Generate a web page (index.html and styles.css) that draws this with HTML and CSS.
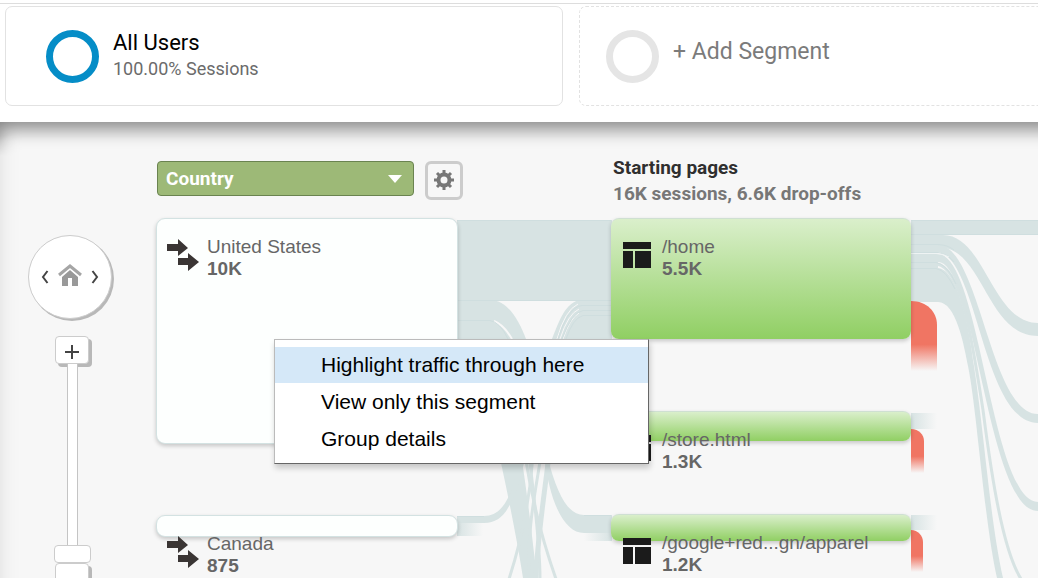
FILE: index.html
```html
<!DOCTYPE html>
<html lang="en">
<head>
<meta charset="utf-8">
<meta name="viewport" content="width=device-width, initial-scale=1">
<title>Users Flow</title>
<link rel="stylesheet" href="styles.css">
</head>
<body>
<svg class="defs" width="0" height="0" aria-hidden="true">
  <symbol id="arrows" viewBox="0 0 32 32">
    <path d="M0 5H11V0L21 9 11 17V12H0ZM11 19H21V14L32 23 21 32V26H11Z"/>
  </symbol>
  <symbol id="page" viewBox="0 0 28 26">
    <path d="M0 0H28V7H0ZM0 9H10V26H0ZM12 9H28V26H12Z"/>
  </symbol>
</svg>

<header class="segments">
  <section class="segment">
    <span class="ring ring-active"></span>
    <div class="segment-text">
      <h2 class="segment-name">All Users</h2>
      <p class="segment-share">100.00% Sessions</p>
    </div>
  </section>
  <button class="segment segment-add" type="button">
    <span class="ring"></span>
    <span class="segment-text">+ Add Segment</span>
  </button>
</header>

<main class="flow">
  <svg class="ribbons" width="1038" height="456" viewBox="0 122 1038 456" aria-hidden="true">
    <defs>
      <linearGradient id="drop" x1="0" y1="0" x2="0" y2="1">
        <stop offset="0" stop-color="#f07563"/>
        <stop offset=".62" stop-color="#f07563"/>
        <stop offset="1" stop-color="#f07563" stop-opacity="0"/>
      </linearGradient>
      <linearGradient id="fade-out">
        <stop offset="0" stop-color="#d7e3e3"/>
        <stop offset="1" stop-color="#d7e3e3" stop-opacity="0"/>
      </linearGradient>
      <linearGradient id="fade-in">
        <stop offset="0" stop-color="#d7e3e3" stop-opacity="0"/>
        <stop offset="1" stop-color="#d7e3e3"/>
      </linearGradient>
    </defs>
    <g fill="#d7e3e3">
      <path d="M457 220H612V300H457Z"/>
      <path d="M457 300H490C508 300 519 321 526 339L545 400H457Z"/>
      <path d="M612 300H582C565 300 558 325 552 339L540 400H612Z"/>
      <path d="M499 455L501 463C508 495 518 545 523 578H537C533 545 527 490 521 455Z"/>
      <path d="M457 516H484C500 516 509 502 516 475L520 455H526L521 475C512 505 504 523 484 523H457Z"/>
      <path d="M544 455C550 505 565 533 584 533H612V515H584C568 515 557 495 547 455Z"/>
      <path d="M911 220H1038V235H911Z"/>
      <path d="M911 235H943C985 235 992 323 1038 323V336C986 336 984 247 938 247H911Z"/>
      <path d="M911 245H938C980 245 990 414 1038 414V423C982 423 978 252 936 252H911Z"/>
      <path d="M911 254H938C980 254 991 502 1038 502V511C987 511 976 262 938 262H911Z"/>
      <path d="M911 262H938V268H911Z"/>
      <path d="M911 268H938C958 270 969 325 974 366C985 440 990 520 1003 578H997C984 520 977 410 968 366C964 345 956 302 938 302H911Z"/>
    </g>
    <g fill="none" stroke="#d7e3e3" stroke-width="3">
      <path d="M937 264C962 268 972 340 983 410C992 480 1003 550 1021 579"/>
      <path d="M533 455C530 500 520 545 509 579"/>
      <path d="M525 455C532 500 544 545 556 579"/>
      <path d="M549 455C545 490 537 540 536 579" stroke-width="5"/>
      <path d="M529 455C533 490 540 540 540 579"/>
      <path d="M541 455C536 490 526 530 530 579"/>
    </g>
    <g fill="none" stroke="#f7f7f7">
      <path d="M494 321Q504 325 512 339" stroke-width="2"/>
      <path d="M578 304Q565 310 557 339"/>
      <path d="M579 309Q568 314 560 339"/>
      <path d="M579 313Q570 318 563 339"/>
    </g>
    <g fill="none" stroke="#cfdedf">
      <path d="M457 300.500H611M457 320.500H490Q500 322 508 339M611 305.500H582Q568 307 558 339M611 310.500H583Q572 312 562 339M611 315.500H583Q573 318 566 339"/>
      <path d="M911 234.500H1038M911 244.500H938Q948 245 954 250M911 252.500H938Q948 254 954 262M911 262.500H936Q947 264 956 284M911 268.500H936Q946 270 955 289"/>
      <path d="M457 220.500H611M911 220.500H1038M457 516.500H484M584 515.500H611"/>
    </g>
    <path d="M911 253.500H936Q944 254 949 257" fill="none" stroke="#eef3f3"/>
    <rect x="457" y="523" width="26" height="13" fill="url(#fade-out)"/>
    <rect x="584" y="533" width="28" height="8" fill="url(#fade-in)"/>
    <rect x="911" y="413" width="26" height="16" fill="url(#fade-out)"/>
    <rect x="911" y="515" width="26" height="15" fill="url(#fade-out)"/>
    <g fill="url(#drop)">
      <path d="M911 301C927 301 937 312 937 325V371H911Z"/>
      <path d="M911 429C919 429 924 435 924 441V473H911Z"/>
      <path d="M911 530C918 530 923 536 923 542V572H911Z"/>
    </g>
  </svg>

  <div class="stage">
    <nav class="navigator" aria-label="Diagram navigation">
      <div class="pan">
        <button type="button" aria-label="Pan left"><svg width="8" height="18" viewBox="0 0 8 18"><path d="M6.500 5L2 11 6.500 17" fill="none" stroke="#444" stroke-width="2"/></svg></button>
        <button type="button" aria-label="Home"><svg width="24" height="22" viewBox="0 0 24 22"><path d="M1 11L12 2 23 11" fill="none" stroke="#a5a5a5" stroke-width="3"/><path d="M4 13L12 6 20 13V22H14V14H10V22H4Z" fill="#999"/></svg></button>
        <button type="button" aria-label="Pan right"><svg width="8" height="18" viewBox="0 0 8 18"><path d="M1.500 5L6 11 1.500 17" fill="none" stroke="#444" stroke-width="2"/></svg></button>
      </div>
      <div class="zoom">
        <button class="zoom-button" type="button" aria-label="Zoom in"><svg width="14" height="14" viewBox="0 0 14 14"><path d="M7 0V14M0 7H14" stroke="#444" stroke-width="2"/></svg></button>
        <input class="zoom-range" type="range" min="0" max="10" value="0" aria-label="Zoom level">
        <button class="zoom-button" type="button" aria-label="Zoom out"><svg width="14" height="14" viewBox="0 0 14 14"><path d="M0 11H14" stroke="#444" stroke-width="2"/></svg></button>
      </div>
    </nav>
    <div class="dimension">
      <div class="picker">
        <select aria-label="Dimension"><option>Country</option></select>
      </div>
      <button class="settings" type="button" aria-label="Settings">
        <svg width="22" height="22" viewBox="-11 -11 22 22">
          <g stroke="#777" stroke-width="3"><path d="M0-10V10M-10 0H10M-7-7L7 7M7-7L-7 7"/></g>
          <circle r="5.500" fill="#f7f7f7" stroke="#777" stroke-width="4"/>
        </svg>
      </button>
    </div>
    <div class="column-heading">
      <h3>Starting pages</h3>
      <p>16K sessions, 6.6K drop-offs</p>
    </div>
  </div>

  <article class="node node-us">
    <svg class="node-icon icon-arrows"><use href="#arrows"/></svg>
    <div><p>United States</p><strong>10K</strong></div>
  </article>
  <article class="node node-canada">
    <svg class="node-icon icon-arrows"><use href="#arrows"/></svg>
    <div><p>Canada</p><strong>875</strong></div>
  </article>
  <article class="node node-page node-home">
    <svg class="node-icon icon-page"><use href="#page"/></svg>
    <div><p>/home</p><strong>5.5K</strong></div>
  </article>
  <article class="node node-page node-store">
    <svg class="node-icon icon-page"><use href="#page"/></svg>
    <div><p>/store.html</p><strong>1.3K</strong></div>
  </article>
  <article class="node node-page node-apparel">
    <svg class="node-icon icon-page"><use href="#page"/></svg>
    <div><p>/google+red...gn/apparel</p><strong>1.2K</strong></div>
  </article>

  <div class="menu" role="menu">
    <button class="menu-item menu-item-active" type="button" role="menuitem">Highlight traffic through here</button>
    <button class="menu-item" type="button" role="menuitem">View only this segment</button>
    <button class="menu-item" type="button" role="menuitem">Group details</button>
  </div>
</main>
</body>
</html>
```
FILE: styles.css
```css
* {
  box-sizing: border-box;
}

body {
  display: flex;
  flex-direction: column;
  height: 100vh;
  margin: 0;
  background: #fff;
  font-family: Roboto, "Liberation Sans", sans-serif;
}

h2, h3, p {
  margin: 0;
}

button {
  padding: 0;
  border: 0;
  background: none;
  color: inherit;
  font: inherit;
}

.defs {
  position: absolute;
}

/* Segment bar */
.segments {
  display: flex;
  gap: 16px;
  margin-top: 3px;
  padding: 2px 0 16px 5px;
  border-top: 1px solid #ddd;
}

.segment {
  display: flex;
  flex: 0 1 558px;
  gap: 14px;
  height: 100px;
  padding: 22px 40px;
  border: 1px solid #e2e2e2;
  border-radius: 7px;
}

.segment-add {
  flex: 1;
  padding-left: 26px;
  border-style: dashed;
  border-right: 0;
  border-radius: 7px 0 0 7px;
  color: #7b7b7b;
  font-size: 23px;
  line-height: 46px;
  text-align: left;
}

.ring {
  flex: none;
  width: 53px;
  height: 53px;
  margin-top: 1px;
  border: 7px solid #e5e5e5;
  border-radius: 50%;
}

.ring-active {
  border-color: #058dc7;
}

.segment-name {
  font-size: 22px;
  font-weight: 400;
  line-height: 28px;
}

.segment-share {
  color: #6b6b6b;
  font-size: 18px;
  line-height: 24px;
}

/* Flow canvas */
.flow {
  position: relative;
  flex: 1;
  min-height: 0;
  overflow: hidden;
  background: #f7f7f7;
}

.flow::after {
  position: absolute;
  inset: 0 -40px -40px 0;
  box-shadow: inset 0 8px 20px -2px rgba(0, 0, 0, .5);
  content: "";
  pointer-events: none;
  mask: linear-gradient(#000 0 14px, rgba(0, 0, 0, .25) 34px);
}

.ribbons {
  position: absolute;
  top: 0;
  left: 0;
}

.stage {
  position: relative;
  display: grid;
  grid-template-columns: 129px 456px 1fr;
  padding: 34px 0 0 28px;
}

.navigator {
  display: flex;
  flex-direction: column;
  gap: 17px;
  width: 90px;
  padding-top: 79px;
}

.pan {
  display: flex;
  align-items: center;
  justify-content: space-between;
  width: 84px;
  height: 84px;
  padding: 0 12px;
  border: 1px solid #ccc;
  border-radius: 50%;
  background: #fff;
  box-shadow: 2px 2px 0 #b8b8b8;
}

.zoom {
  display: flex;
  flex-direction: column;
  align-items: center;
  width: 88px;
}

.zoom-button {
  display: grid;
  place-items: center;
  width: 34px;
  height: 28px;
  padding-top: 3px;
  border: 1px solid #ccc;
  border-radius: 4px;
  background: #fff;
  box-shadow: 3px 3px 0 #b8b8b8;
}

.zoom-range {
  position: relative;
  width: 38px;
  height: 199px;
  margin: 0;
  appearance: none;
  background: none;
  direction: rtl;
  writing-mode: vertical-lr;
}

.zoom-range::-webkit-slider-runnable-track {
  display: flex;
  align-items: center;
  width: 11px;
  height: 199px;
  border: solid #c4c4c4;
  border-width: 0 1px;
  background: #fff;
}

.zoom-range::-webkit-slider-thumb {
  flex: none;
  width: 37px;
  height: 18px;
  margin-left: -14px;
  appearance: none;
  border: 1px solid #ccc;
  border-radius: 4px;
  background: #fff;
}

.dimension {
  display: flex;
  gap: 11px;
  padding-top: 5px;
}

.picker {
  position: relative;
  width: 257px;
  height: 35px;
}

.picker select {
  width: 100%;
  height: 100%;
  padding: 0 8px;
  appearance: none;
  border: 1px solid #6a8350;
  border-radius: 4px;
  background: #9db977;
  color: #fff;
  font: 700 19px Roboto, sans-serif;
}

.picker::after {
  position: absolute;
  top: 14px;
  right: 12px;
  border: solid transparent;
  border-width: 8px 7px 0;
  border-top-color: #fff;
  content: "";
  pointer-events: none;
}

.settings {
  display: grid;
  place-items: center;
  width: 38px;
  height: 39px;
  padding-bottom: 2px;
  border: 3px solid #ccc;
  border-radius: 6px;
}

.column-heading {
  color: #777;
  font-size: 19px;
  font-weight: 700;
  line-height: 28px;
  white-space: nowrap;
}

.column-heading h3 {
  color: #2f2f2f;
  font-size: 19px;
  line-height: 24px;
}

/* Diagram nodes */
.node {
  position: absolute;
  left: 156px;
  display: flex;
  align-items: flex-start;
  width: 302px;
  padding: 17px 0 0 10px;
  border: 1px solid #d3e2e2;
  border-radius: 9px;
  background: #fdfffe;
  box-shadow: 0 2px 4px rgba(0, 0, 0, .2);
  color: #666;
  font: 19px/22px "Liberation Sans", sans-serif;
  white-space: nowrap;
}

.node-page {
  left: 611px;
  width: 300px;
  padding-left: 11px;
  border: 0;
  border-top: 1px solid #cfe0d2;
  border-radius: 8px;
  background: linear-gradient(#daefcb, #90cf63);
}

.node-icon {
  flex: none;
  margin-top: 3px;
}

.icon-arrows {
  width: 32px;
  height: 32px;
  margin-right: 8px;
  fill: #3a3534;
}

.icon-page {
  width: 28px;
  height: 26px;
  margin: 6px 11px 0 1px;
  fill: #1b1b1b;
}

.node-us {
  top: 96px;
  height: 226px;
}

.node-canada {
  top: 393px;
  height: 22px;
}

.node-home {
  top: 96px;
  height: 121px;
}

.node-store {
  top: 289px;
  height: 30px;
}

.node-apparel {
  top: 392px;
  height: 27px;
}

/* Context menu */
.menu {
  position: absolute;
  top: 217px;
  left: 274px;
  display: grid;
  gap: 1px;
  width: 375px;
  padding: 7px 0 6px;
  border: 1px solid #666;
  border-color: #bbb #666 #666 #bbb;
  background: #fff;
  box-shadow: 1px 4px 6px rgba(0, 0, 0, .2);
}

.menu-item {
  height: 36px;
  padding-left: 46px;
  color: #000;
  font: 21px/36px "Liberation Sans", sans-serif;
  text-align: left;
}

.menu-item-active {
  background: #d5e8f8;
}
```
